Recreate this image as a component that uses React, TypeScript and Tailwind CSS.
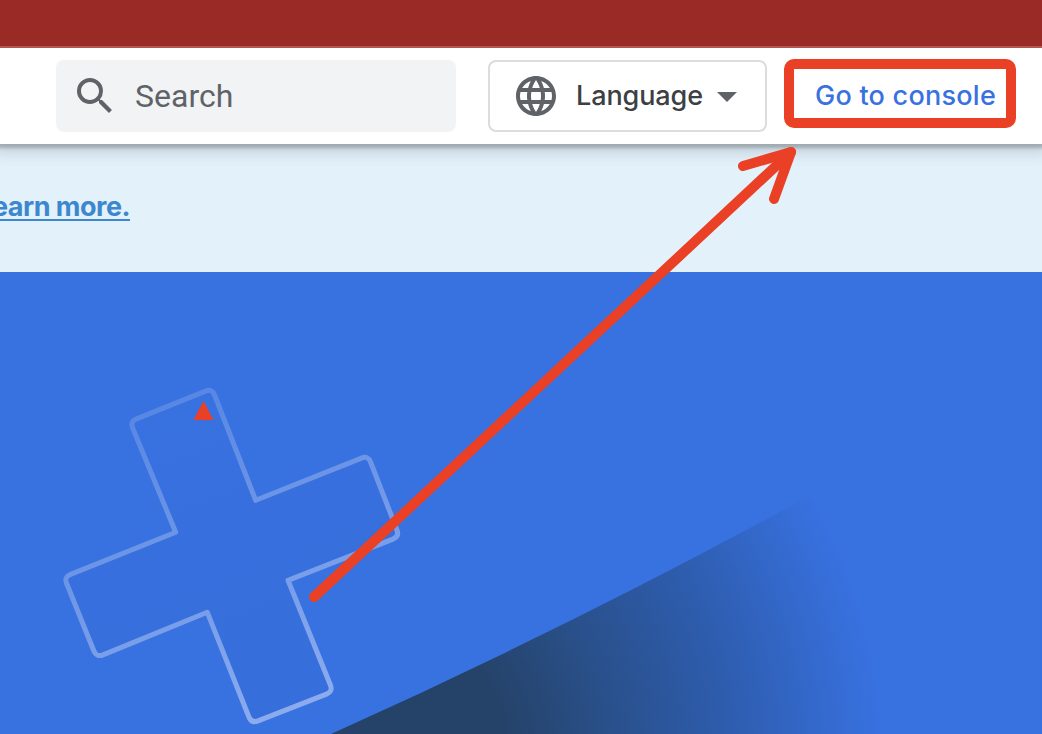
const crossPoints: [number, number, boolean][] = [
  [130, 421.5, true],
  [212, 388.5, true],
  [255.7, 500.3, false],
  [368, 455.5, true],
  [399.5, 536.5, true],
  [288, 580.3, false],
  [333, 691.5, true],
  [251.5, 723.5, true],
  [207.3, 612.3, false],
  [96.5, 657.5, true],
  [64, 577, true],
  [175.7, 532.3, false],
];

function roundedPath(points: [number, number, boolean][], radius: number) {
  const n = points.length;
  const toward = (a: number[], b: number[]) => {
    const d = Math.hypot(b[0] - a[0], b[1] - a[1]);
    return `${a[0] + ((b[0] - a[0]) * radius) / d} ${a[1] + ((b[1] - a[1]) * radius) / d}`;
  };
  return (
    points
      .map(([x, y, round], i) => {
        const cmd = i === 0 ? "M" : "L";
        if (!round) return `${cmd}${x} ${y}`;
        const prev = [points[(i + n - 1) % n][0], points[(i + n - 1) % n][1]];
        const next = [points[(i + 1) % n][0], points[(i + 1) % n][1]];
        return `${cmd}${toward([x, y], prev)}Q${x} ${y} ${toward([x, y], next)}`;
      })
      .join("") + "Z"
  );
}

function Header() {
  return (
    <header className="relative z-10 flex h-24 shrink-0 items-start bg-white pl-14 pt-3 shadow-[0_1px_3px_3px_rgba(60,64,67,0.28),0_2px_14px_6px_rgba(60,64,67,0.2)]">
      <div className="flex h-[72px] w-[400px] items-center rounded-lg bg-[#f1f3f4] pl-[15px]">
        <svg viewBox="0 0 24 24" className="h-12 w-12 shrink-0 fill-[#5f6368]">
          <path d="M15.5 14h-.79l-.28-.27A6.471 6.471 0 0 0 16 9.5 6.5 6.5 0 1 0 9.5 16c1.61 0 3.09-.59 4.23-1.57l.27.28v.79l5 4.99L20.49 19l-4.99-5zm-6 0C7.01 14 5 11.99 5 9.5S7.01 5 9.5 5 14 7.01 14 9.5 11.99 14 9.5 14z" />
        </svg>
        <span className="ml-4 font-[Roboto,sans-serif] text-[32px] leading-none text-[#5f6368]">Search</span>
      </div>
      <button className="ml-8 flex h-[72px] w-[279px] items-center rounded-lg border-2 border-[#dadce0] pl-[22px]">
        <svg viewBox="0 0 24 24" className="h-12 w-12 shrink-0 fill-[#5f6368]">
          <path d="M11.99 2C6.47 2 2 6.48 2 12s4.47 10 9.99 10C17.52 22 22 17.52 22 12S17.52 2 11.99 2zm6.93 6h-2.95a15.65 15.65 0 0 0-1.38-3.56A8.03 8.03 0 0 1 18.92 8zM12 4.04c.83 1.2 1.48 2.53 1.91 3.96h-3.82c.43-1.43 1.08-2.76 1.91-3.96zM4.26 14C4.1 13.36 4 12.69 4 12s.1-1.36.26-2h3.38c-.08.66-.14 1.32-.14 2s.06 1.34.14 2H4.26zm.82 2h2.95c.32 1.25.78 2.45 1.38 3.56A7.987 7.987 0 0 1 5.08 16zm2.95-8H5.08a7.987 7.987 0 0 1 4.33-3.56A15.65 15.65 0 0 0 8.03 8zM12 19.96c-.83-1.2-1.48-2.53-1.91-3.96h3.82c-.43 1.43-1.08 2.76-1.91 3.96zM14.34 14H9.66c-.09-.66-.16-1.32-.16-2s.07-1.35.16-2h4.68c.09.65.16 1.32.16 2s-.07 1.34-.16 2zm.25 5.56c.6-1.11 1.06-2.31 1.38-3.56h2.95a8.03 8.03 0 0 1-4.33 3.56zM16.36 14c.08-.66.14-1.32.14-2s-.06-1.34-.14-2h3.38c.16.64.26 1.31.26 2s-.1 1.36-.26 2h-3.38z" />
        </svg>
        <span className="-mt-0.5 ml-4 w-32 whitespace-nowrap text-left font-[Inter,sans-serif] text-[27px] font-medium leading-none tracking-[-0.1px] text-[#3c4043]">
          Language
        </span>
        <svg viewBox="0 0 20 10" className="ml-[13px] mt-px h-2.5 w-5 fill-[#5f6368]">
          <path d="M0 0h20L10 10z" />
        </svg>
      </button>
      <div className="-mt-px ml-[17px] flex h-[69px] w-[232px] items-center rounded-[10px] border-10 border-[#ea4025] pl-[21px]">
        <a className="mt-1 whitespace-nowrap font-[Inter,sans-serif] text-[27px] font-medium leading-none tracking-[0.25px] text-[#3871e0]">
          Go to console
        </a>
      </div>
    </header>
  );
}

export default function App() {
  return (
    <div className="relative flex h-[734px] w-[1042px] flex-col overflow-hidden bg-[#3871e0]">
      <div className="relative z-20 h-12 shrink-0 border-b-2 border-[#b35551] bg-[#992a25]" />
      <Header />
      <div className="flex h-32 shrink-0 items-center bg-[#e3f1fb] pb-[3px]">
        <div className="flex w-[130px] justify-end">
          <a className="whitespace-nowrap border-b-2 border-[#3c87cd] pt-0.5 font-[Inter,sans-serif] text-[27px] font-bold leading-[25px] tracking-[-0.5px] text-[#3c87cd]">
            Learn more.
          </a>
        </div>
      </div>
      <main className="min-h-0 flex-1">
        <svg viewBox="0 272 1042 462" className="h-full w-full">
          <defs>
            <radialGradient id="shade" gradientUnits="userSpaceOnUse" cx="350" cy="760" r="531">
              <stop offset="0.29" stopColor="#254268" />
              <stop offset="0.47" stopColor="#294f87" />
              <stop offset="0.72" stopColor="#2e5daf" />
              <stop offset="1" stopColor="#3871e0" />
            </radialGradient>
            <linearGradient id="outline" gradientUnits="userSpaceOnUse" x1="170" y1="400" x2="292" y2="708">
              <stop offset="0" stopColor="#5886e4" />
              <stop offset="0.5" stopColor="#7299e8" />
              <stop offset="1" stopColor="#8babee" />
            </linearGradient>
            <linearGradient id="inside" gradientUnits="userSpaceOnUse" x1="170" y1="400" x2="292" y2="708">
              <stop offset="0" stopColor="#3871e0" />
              <stop offset="1" stopColor="#366edb" />
            </linearGradient>
          </defs>
          <path d="M331 734Q565 629 802 500L900 500V734Z" fill="url(#shade)" />
          <path d={roundedPath(crossPoints, 7)} fill="url(#inside)" stroke="url(#outline)" strokeWidth="5" strokeLinejoin="round" />
          <path d="M203.5 401L213.5 420H193.5Z" fill="#ea4025" />
        </svg>
      </main>
      <svg viewBox="0 0 1042 734" className="pointer-events-none absolute inset-0 z-20 h-full w-full">
        <g fill="none" stroke="#ea4025" strokeWidth="10" strokeLinecap="round" strokeLinejoin="round">
          <path d="M314 597L791 152" />
          <path d="M743 166L791 152L774 199" />
        </g>
      </svg>
    </div>
  );
}
